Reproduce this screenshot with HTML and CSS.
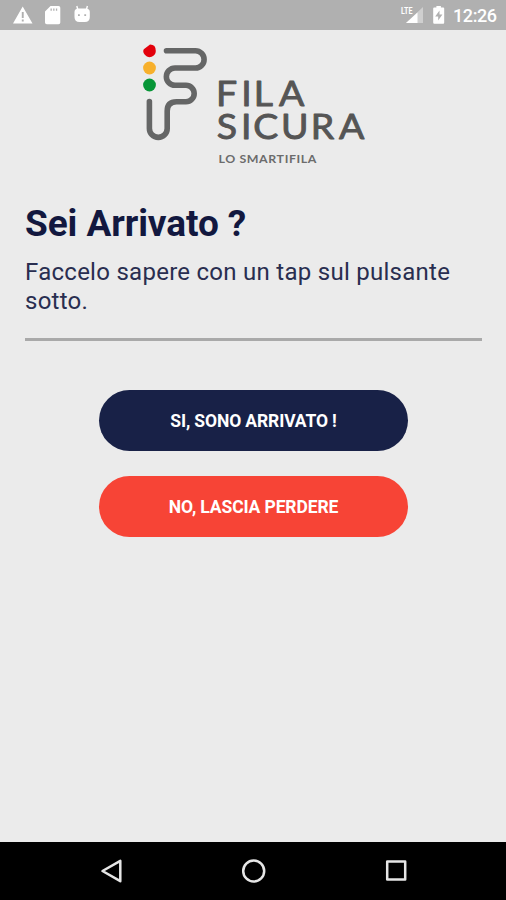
FILE: index.html
```html
<!DOCTYPE html>
<html lang="it">
<head>
<meta charset="utf-8">
<title>Fila Sicura</title>
<link rel="stylesheet" href="styles.css">
</head>
<body>
<div class="screen">
  <header class="status">
    <svg class="status-left" width="100" height="30" viewBox="0 0 100 30" fill="#fff">
      <path fill-rule="evenodd" d="M22.700 6.500 32.500 23.500H13ZM21.800 12v6h1.900v-6Zm0 7.500v2h1.900v-2Z"/>
      <path fill-rule="evenodd" d="M50.500 6H58.500a1.800 1.800 0 0 1 1.800 1.800V22.500a1.800 1.800 0 0 1-1.800 1.800H46.800a1.800 1.800 0 0 1-1.800-1.800V11.500ZM50.500 8.500v2.200h1.300v-2.200Zm2.700 0v2.200h1.300v-2.200Zm2.700 0v2.200h1.300v-2.200Z"/>
      <path fill-rule="evenodd" d="M74.500 12q0-3.500 4-3.500h7.300q4 0 4 3.500v5q0 5-5 5h-5.300q-5 0-5-5ZM78 14.200v1.700h1.800v-1.700Zm6.300 0v1.700h1.800v-1.700Z"/>
      <path d="m77.800 9.500-1-3.500M86.400 9.500l1-3.500" stroke="#fff" stroke-width="1.400"/>
    </svg>
    <div class="status-right">
      <svg width="54" height="30" viewBox="0 0 54 30">
        <path d="M24 7v16H7Z" fill="#fff" opacity=".4"/>
        <path d="M18.500 12.500V23H7Z" fill="#fff"/>
        <text class="lte" x="2" y="14" textLength="11.500" lengthAdjust="spacingAndGlyphs">LTE</text>
        <path fill="#fff" fill-rule="evenodd" d="M35.200 7.500h2.200V6h4.500v1.500H44.200q1 0 1 1V22.500q0 1.300-1 1.300h-9q-1 0-1-1.300V8.500q0-1 1-1ZM40.500 10.500l-4.300 6h3v4l4.200-6h-2.900Z"/>
      </svg>
      <span class="time">12:26</span>
    </div>
  </header>
  <main class="content">
    <svg class="logo" width="226" height="130" viewBox="140 40 226 130" role="img" aria-label="Fila Sicura">
      <path d="M143.800 49.300 150 44.600Q155.800 44.500 155.800 51A6.200 6.200 0 0 1 144.800 54.800Q142.300 51.800 143.800 49.300Z" fill="#e3000b"/>
      <circle cx="149.500" cy="68" r="6.400" fill="#f7b02c"/>
      <circle cx="149.500" cy="85" r="6.400" fill="#079637"/>
      <path class="route" d="M166.500 50.800H195.500A8.600 8.600 0 0 1 195.500 68H175A8.650 8.650 0 0 0 175 85.300H186A8.200 8.200 0 0 1 186 101.700H176.500Q167.200 101.700 167.200 111V128.500A8.900 8.900 0 0 1 149.400 128.500V101.500"/>
      <g transform="translate(217 0) scale(1.1 1)">
        <text class="brand" x="-1 22.100 33.400 56.400" y="106">FILA</text>
        <text class="brand" x="-0.200 21.900 33 58.200 85.300 111" y="138.700">SICURA</text>
      </g>
      <text class="tag" x="218.500" y="163" textLength="98.500" lengthAdjust="spacingAndGlyphs">LO SMARTIFILA</text>
    </svg>
    <section class="message">
      <h1>Sei Arrivato ?</h1>
      <p>Faccelo sapere con un tap sul pulsante sotto.</p>
    </section>
    <div class="actions">
      <button class="btn yes">SI, SONO ARRIVATO !</button>
      <button class="btn no">NO, LASCIA PERDERE</button>
    </div>
  </main>
  <nav class="navbar">
    <svg width="506" height="58" viewBox="0 0 506 58" fill="none" stroke="#e6e6e6" stroke-width="2.500">
      <path d="M120.300 18.800v20.400L102.500 29Z" stroke-linejoin="round"/>
      <circle cx="253.700" cy="29" r="10.500"/>
      <rect x="387.200" y="19.600" width="18" height="18" stroke-linejoin="round"/>
    </svg>
  </nav>
</div>
</body>
</html>
```

FILE: styles.css
```css
* { box-sizing: border-box; }
body { margin: 0; font-family: Roboto, "Liberation Sans", sans-serif; }
.screen { width: 506px; height: 900px; display: flex; flex-direction: column; background: #ebebeb; overflow: hidden; }
.status { height: 30px; flex: none; display: flex; justify-content: space-between; background: #b0b0b0; color: #fff; }
.status svg { display: block; }
.status-right { display: flex; width: 107px; }
.lte { font: 700 9px Roboto, sans-serif; fill: #fff; }
.time { font-size: 18px; line-height: 32px; font-weight: 500; letter-spacing: -0.4px; }
.content { flex: 1; min-height: 0; display: flex; flex-direction: column; }
.logo { display: block; margin: 10px 0 0 140px; flex: none; }
.route { fill: none; stroke: #656666; stroke-width: 5.6; stroke-linecap: round; stroke-linejoin: round; }
.brand { font: 400 34px Lato, sans-serif; fill: #555; stroke: #555; stroke-width: 0.9; stroke-linejoin: round; }
.tag { font: 700 10.5px Lato, sans-serif; fill: #6c6c6c; letter-spacing: 0.5px; }
.message { margin: 31px 24px 0 25px; padding-bottom: 22px; border-bottom: 3px solid #a9a9a9; color: #12183f; }
h1 { margin: 0; font-size: 37px; line-height: 46px; font-weight: 700; letter-spacing: -0.08px; }
p { margin: 11px 0 0; font-size: 24px; line-height: 29px; font-weight: 400; color: #292e50; letter-spacing: 0.27px; }
.actions { display: flex; flex-direction: column; align-items: center; gap: 25px; margin: 48.5px 0 0 1px; }
.btn { width: 309px; height: 61px; padding: 1px 0 0; border: 0; border-radius: 31px; color: #fff; font: 700 17.5px Roboto, sans-serif; letter-spacing: -0.12px; }
.yes { background: #182147; }
.no { background: #f74436; }
.navbar { height: 58px; flex: none; background: #000; }
.navbar svg { display: block; }
```
